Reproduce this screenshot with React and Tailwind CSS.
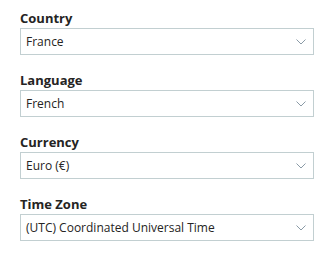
import React from 'react';

const fields = [
  { label: 'Country', value: 'France' },
  { label: 'Language', value: 'French' },
  { label: 'Currency', value: 'Euro (€)' },
  { label: 'Time Zone', value: '(UTC) Coordinated Universal Time' },
];

function Chevron() {
  return (
    <svg width="10" height="6" viewBox="0 0 10 6" fill="none" className="shrink-0">
      <path d="M0.5 0.5 L5 5 L9.5 0.5" stroke="#8a9aa6" strokeWidth="1" />
    </svg>
  );
}

export default function App() {
  return (
    <div className="w-[331px] h-[269px] bg-white pl-5 pt-[9px]" style={{ fontFamily: '"Open Sans", "Noto Sans", sans-serif' }}>
      <div className="flex flex-col gap-4 w-[294px]">
        {fields.map((f) => (
          <div key={f.label} className="flex flex-col">
            <label className="text-[13px] font-bold text-[#252423] leading-[18px] mb-[1px]">{f.label}</label>
            <div className="h-[27px] border border-[#c2cfd1] flex items-center justify-between pl-[5px] pr-[7px]">
              <span className="text-[12px] text-[#252423]">{f.value}</span>
              <Chevron />
            </div>
          </div>
        ))}
      </div>
    </div>
  );
}
